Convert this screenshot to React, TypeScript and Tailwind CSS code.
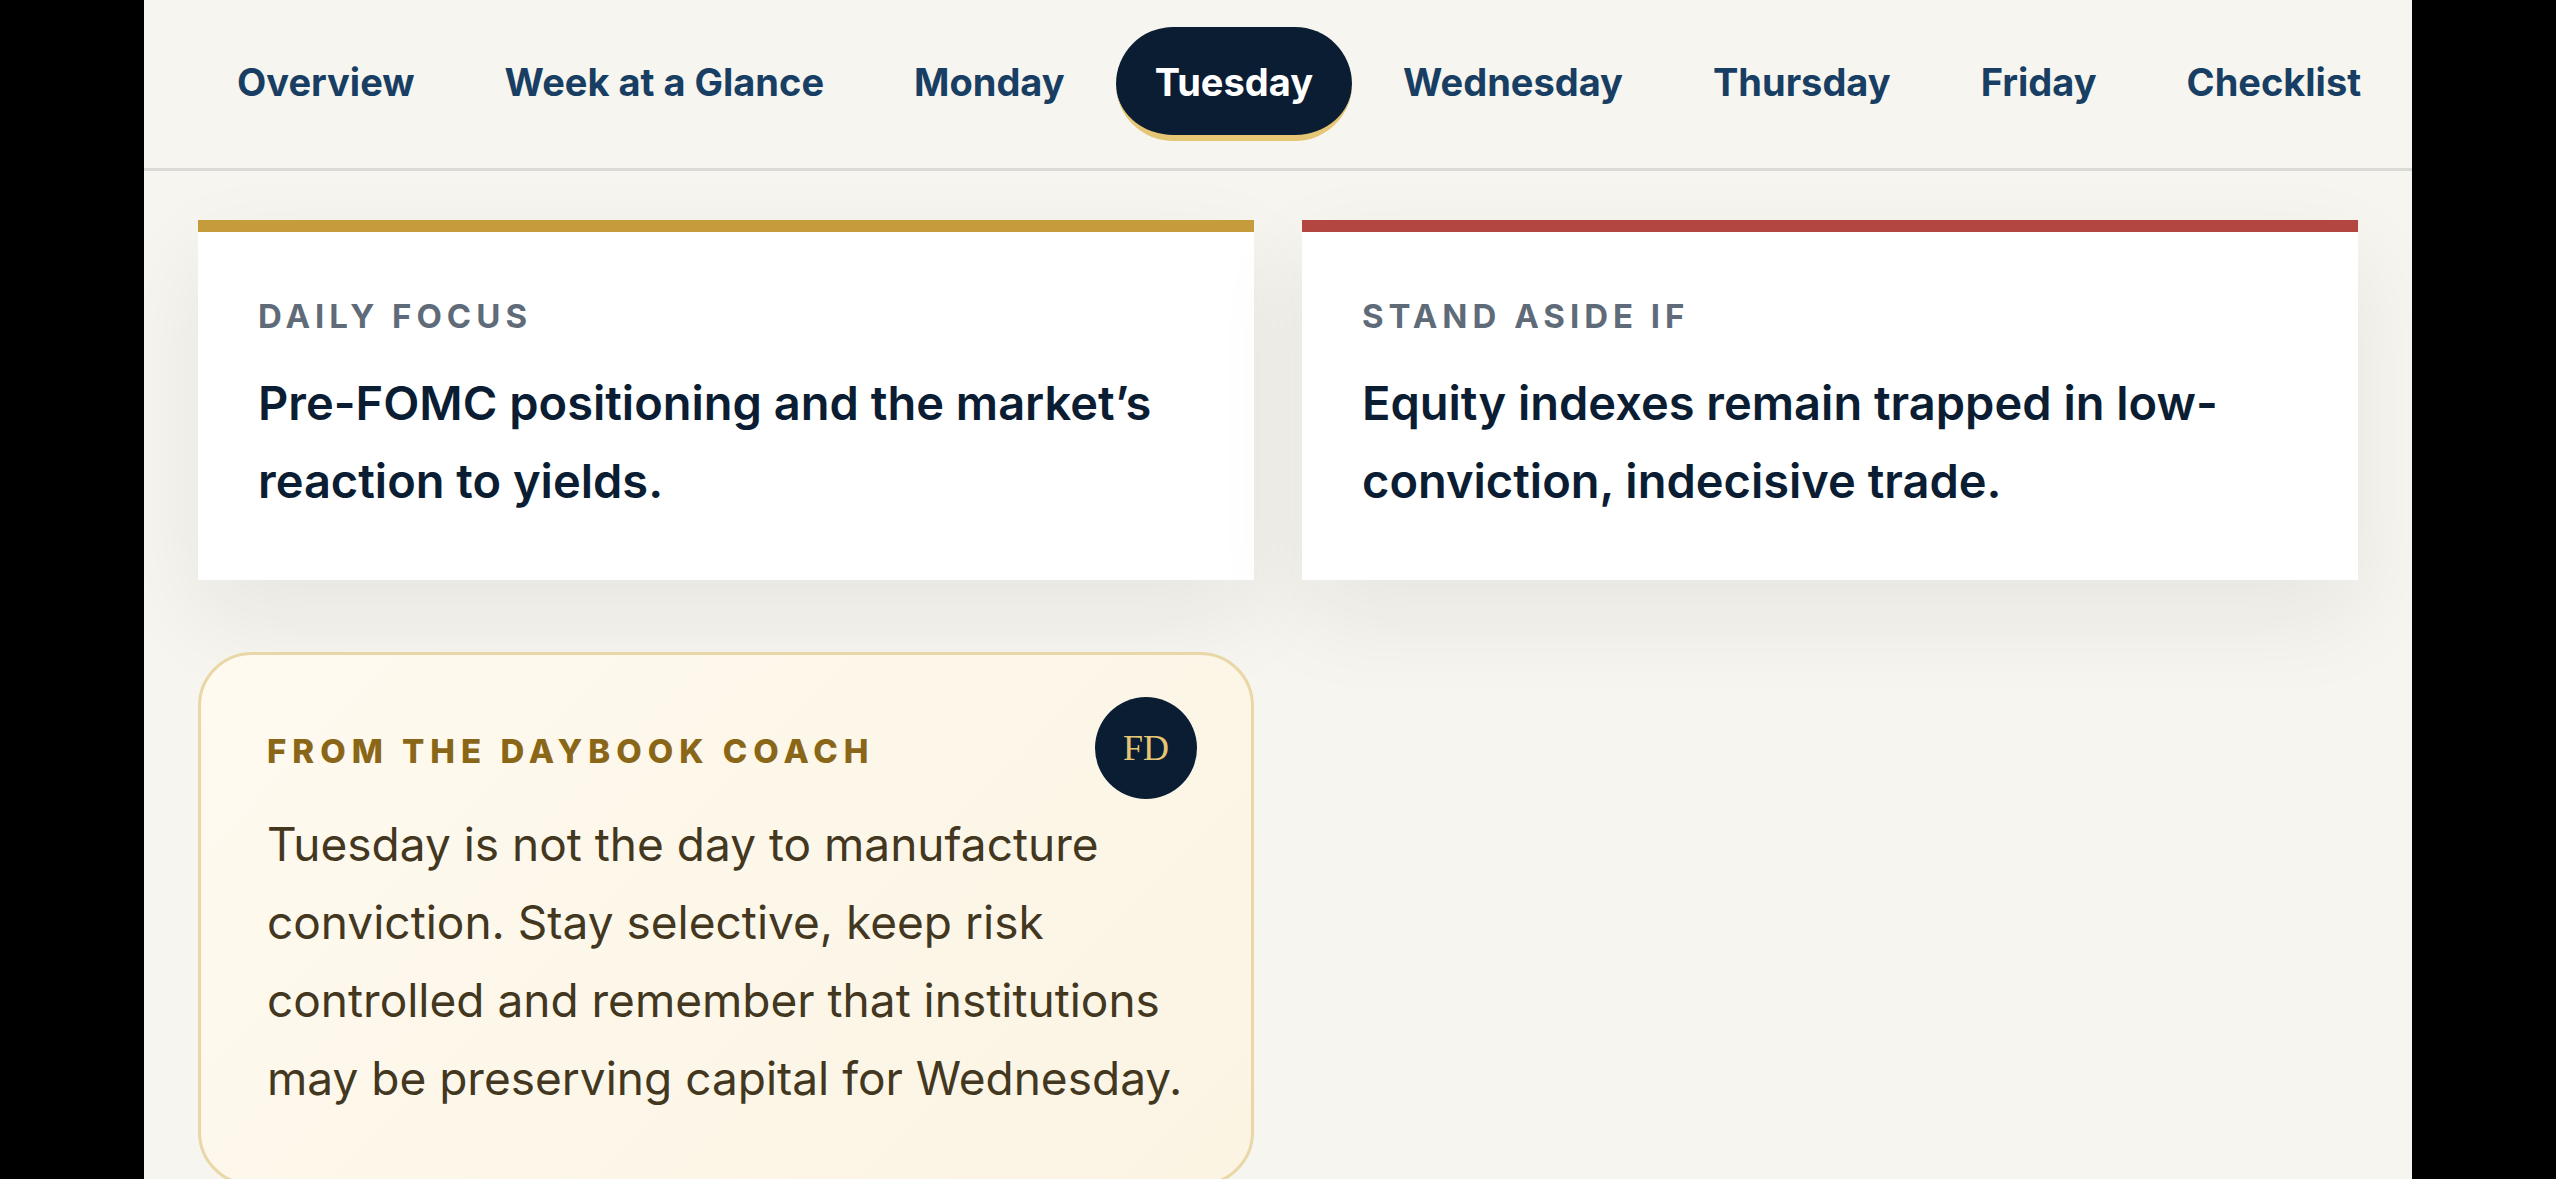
const tabs = [
  { label: "Overview", href: "#overview" },
  { label: "Week at a Glance", href: "#week" },
  { label: "Monday", href: "#monday" },
  { label: "Tuesday", href: "#tuesday" },
  { label: "Wednesday", href: "#wednesday" },
  { label: "Thursday", href: "#thursday" },
  { label: "Friday", href: "#friday" },
  { label: "Checklist", href: "#checklist" },
];

function TabBar({ active }: { active: string }) {
  return (
    <nav className="relative z-10 flex gap-3 overflow-x-auto border-b-3 border-[#dadad6] bg-[#f6f5ef] px-[54px] py-[27px] [scrollbar-width:none]">
      {tabs.map((tab) => (
        <a
          key={tab.label}
          href={tab.href}
          aria-current={tab.label === active ? "page" : undefined}
          className={
            tab.label === active
              ? "shrink-0 rounded-full border-b-6 border-[#e5c675] bg-[#0b1d33] px-[39px] pt-7 pb-[26px] text-[38px] leading-[54px] font-bold whitespace-nowrap text-white"
              : "shrink-0 rounded-full border-b-6 border-transparent px-[39px] pt-7 pb-[26px] text-[38px] leading-[54px] font-bold whitespace-nowrap text-[#183f63]"
          }
        >
          {tab.label}
        </a>
      ))}
    </nav>
  );
}

export default function App() {
  return (
    <div className="min-h-screen bg-black px-36 font-[Inter,sans-serif]">
      <div className="min-h-screen overflow-hidden bg-[#f6f5f0]">
        <TabBar active="Tuesday" />

        <main
          id="tuesday"
          className="grid grid-cols-2 items-start gap-x-12 gap-y-[72px] px-[54px] pt-[49px] pb-24"
        >
          <section className="border-t-12 border-[#c69b3b] bg-white p-[60px] shadow-[0_36px_90px_rgba(25,25,20,0.07)]">
            <h2 className="mb-6 text-[33px] leading-[48px] font-bold tracking-[5px] text-[#5f6b78] uppercase">
              Daily focus
            </h2>
            <p className="text-[47px] leading-[78px] font-semibold text-[#0b1d33]">
              Pre-FOMC positioning and the market’s reaction to yields.
            </p>
          </section>

          <section className="border-t-12 border-[#b34641] bg-white p-[60px] shadow-[0_36px_90px_rgba(25,25,20,0.07)]">
            <h2 className="mb-6 text-[33px] leading-[48px] font-bold tracking-[5px] text-[#5f6b78] uppercase">
              Stand aside if
            </h2>
            <p className="text-[47px] leading-[78px] font-semibold text-[#0b1d33]">
              Equity indexes remain trapped in low-conviction, indecisive trade.
            </p>
          </section>

          <aside className="relative rounded-[54px] border-3 border-[#ead7a7] bg-linear-135 from-[#fffaf0] to-[#fbf4e3] p-[66px]">
            <span
              aria-hidden="true"
              className="absolute top-[42px] right-[54px] flex size-[102px] items-center justify-center rounded-full bg-[#0b1d33] font-['Liberation_Serif',serif] text-[36px] text-[#e5c675]"
            >
              FD
            </span>
            <h2 className="mb-6 text-[33px] leading-[60px] font-extrabold tracking-[6px] text-[#8a6718] uppercase">
              From the daybook coach
            </h2>
            <p className="text-[46px] leading-[78px] text-[#43381f]">
              Tuesday is not the day to manufacture conviction. Stay selective,
              keep risk controlled and remember that institutions may be
              preserving capital for Wednesday.
            </p>
          </aside>
        </main>
      </div>
    </div>
  );
}
